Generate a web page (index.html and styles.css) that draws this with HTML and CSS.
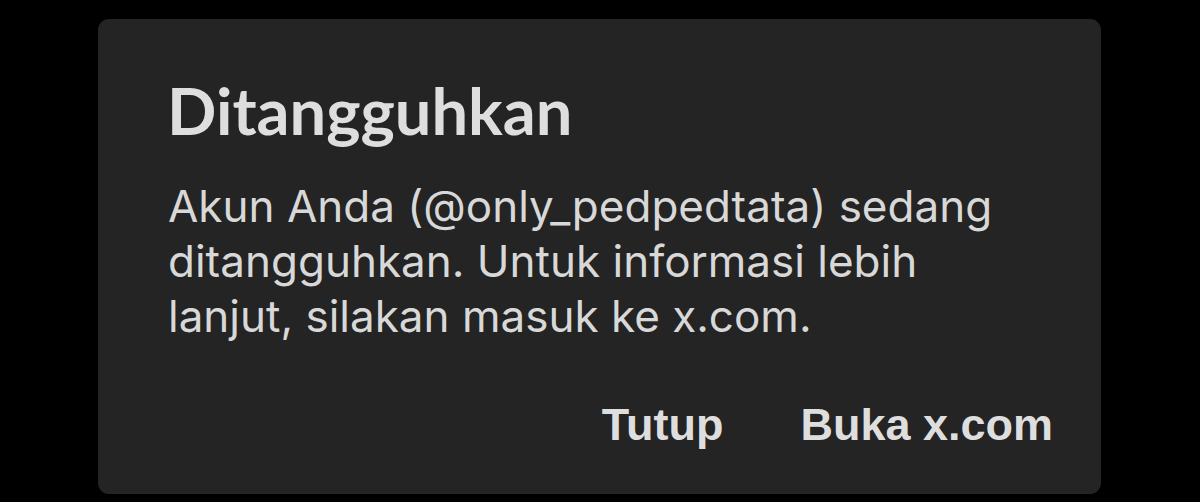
FILE: index.html
```html
<!DOCTYPE html>
<html lang="id">

<head>
    <meta charset="UTF-8">
    <meta name="viewport" content="width=device-width, initial-scale=1.0">
    <title>Ditangguhkan</title>
    <link rel="stylesheet" href="styles.css">
</head>

<body>
    <div class="dialog">
        <h1 class="dialog-title">Ditangguhkan</h1>
        <p class="dialog-text">Akun Anda (@only_pedpedtata) sedang ditangguhkan. Untuk informasi lebih lanjut, silakan masuk ke x.com.</p>
        <div class="dialog-actions">
            <button class="dialog-btn">Tutup</button>
            <button class="dialog-btn">Buka x.com</button>
        </div>
    </div>
</body>

</html>
```
FILE: styles.css
```css
/* Basic Reset */
html,
body {
    margin: 0;
    padding: 0;
    height: 100%;
    background-color: #000000;
}

body {
    padding: 19px 99px 8px 98px;
    box-sizing: border-box;
}

/* Dialog */
.dialog {
    background-color: #242424;
    border-radius: 11px;
    height: 475px;
    box-sizing: border-box;
    padding: 61px 48px 0 69px;
}

.dialog-title {
    margin: 0;
    font-family: 'Lato', sans-serif;
    font-weight: 700;
    font-size: 65px;
    line-height: 60px;
    color: #dedede;
}

.dialog-text {
    margin: 39px 0 0 1px;
    font-family: 'Inter', sans-serif;
    font-weight: 400;
    font-size: 44px;
    line-height: 55px;
    color: #d8d8d8;
    max-width: 840px;
}

/* Actions */
.dialog-actions {
    display: flex;
    justify-content: flex-end;
    gap: 77px;
    margin-top: 55px;
}

.dialog-btn {
    background: none;
    border: none;
    padding: 0;
    font-family: 'Liberation Sans', Arial, sans-serif;
    font-weight: 700;
    font-size: 45px;
    line-height: 52px;
    color: #dedede;
    cursor: pointer;
}
```
